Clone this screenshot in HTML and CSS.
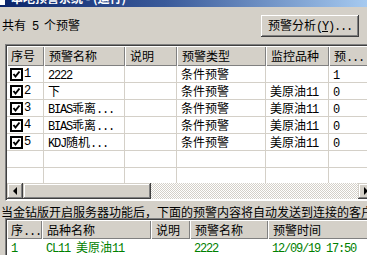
FILE: index.html
```html
<!DOCTYPE html>
<html lang="zh-CN">
<head>
  <meta charset="UTF-8" />
  <title>本地预警系统</title>
  <link rel="stylesheet" href="styles.css">
</head>
<body>
  <div class="window">
    <div class="titlebar">
      <span class="app-icon"></span>
      <span class="title">本地预警系统 - (运行)</span>
    </div>

    <div class="toolbar">
      <span class="count">共有<span class="en"> 5 </span>个预警</span>
      <button class="btn">预警分析<span class="en">(<u>Y</u>)...</span></button>
    </div>

    <div class="listview alerts">
      <div class="lv-head">
        <div class="th">序号</div>
        <div class="th">预警名称</div>
        <div class="th">说明</div>
        <div class="th">预警类型</div>
        <div class="th">监控品种</div>
        <div class="th">预<span class="en">...</span></div>
      </div>
      <div class="lv-body">
        <div class="tr">
          <div class="td idx"><svg class="check" width="13" height="13" viewBox="0 0 13 13"><rect x="1" y="1" width="11" height="11" fill="#fff" stroke="#000" stroke-width="2"/><polyline points="3.5,6 5.5,8.5 9.5,3.5" fill="none" stroke="#000" stroke-width="2"/></svg><span class="en">1</span></div>
          <div class="td"><span class="en">2222</span></div>
          <div class="td"></div>
          <div class="td">条件预警</div>
          <div class="td"></div>
          <div class="td"><span class="en">1</span></div>
        </div>
        <div class="tr">
          <div class="td idx"><svg class="check" width="13" height="13" viewBox="0 0 13 13"><rect x="1" y="1" width="11" height="11" fill="#fff" stroke="#000" stroke-width="2"/><polyline points="3.5,6 5.5,8.5 9.5,3.5" fill="none" stroke="#000" stroke-width="2"/></svg><span class="en">2</span></div>
          <div class="td">下</div>
          <div class="td"></div>
          <div class="td">条件预警</div>
          <div class="td">美原油<span class="en">11</span></div>
          <div class="td"><span class="en">0</span></div>
        </div>
        <div class="tr">
          <div class="td idx"><svg class="check" width="13" height="13" viewBox="0 0 13 13"><rect x="1" y="1" width="11" height="11" fill="#fff" stroke="#000" stroke-width="2"/><polyline points="3.5,6 5.5,8.5 9.5,3.5" fill="none" stroke="#000" stroke-width="2"/></svg><span class="en">3</span></div>
          <div class="td"><span class="en">BIAS</span>乖离<span class="en">...</span></div>
          <div class="td"></div>
          <div class="td">条件预警</div>
          <div class="td">美原油<span class="en">11</span></div>
          <div class="td"><span class="en">0</span></div>
        </div>
        <div class="tr">
          <div class="td idx"><svg class="check" width="13" height="13" viewBox="0 0 13 13"><rect x="1" y="1" width="11" height="11" fill="#fff" stroke="#000" stroke-width="2"/><polyline points="3.5,6 5.5,8.5 9.5,3.5" fill="none" stroke="#000" stroke-width="2"/></svg><span class="en">4</span></div>
          <div class="td"><span class="en">BIAS</span>乖离<span class="en">...</span></div>
          <div class="td"></div>
          <div class="td">条件预警</div>
          <div class="td">美原油<span class="en">11</span></div>
          <div class="td"><span class="en">0</span></div>
        </div>
        <div class="tr">
          <div class="td idx"><svg class="check" width="13" height="13" viewBox="0 0 13 13"><rect x="1" y="1" width="11" height="11" fill="#fff" stroke="#000" stroke-width="2"/><polyline points="3.5,6 5.5,8.5 9.5,3.5" fill="none" stroke="#000" stroke-width="2"/></svg><span class="en">5</span></div>
          <div class="td"><span class="en">KDJ</span>随机<span class="en">...</span></div>
          <div class="td"></div>
          <div class="td">条件预警</div>
          <div class="td">美原油<span class="en">11</span></div>
          <div class="td"><span class="en">0</span></div>
        </div>
        <div class="tr">
          <div class="td"></div><div class="td"></div><div class="td"></div>
          <div class="td"></div><div class="td"></div><div class="td"></div>
        </div>
        <div class="tr">
          <div class="td"></div><div class="td"></div><div class="td"></div>
          <div class="td"></div><div class="td"></div><div class="td"></div>
        </div>
      </div>
      <div class="hscroll">
        <div class="sb-btn"><span class="arrow-left"></span></div>
        <div class="sb-thumb"></div>
        <div class="sb-track"></div>
        <div class="sb-btn"><span class="arrow-right"></span></div>
      </div>
    </div>

    <div class="caption">当金钻版开启服务器功能后，下面的预警内容将自动发送到连接的客户端</div>

    <div class="listview log">
      <div class="lv-head">
        <div class="th">序<span class="en">...</span></div>
        <div class="th">品种名称</div>
        <div class="th">说明</div>
        <div class="th">预警名称</div>
        <div class="th">预警时间</div>
      </div>
      <div class="lv-body">
        <div class="tr">
          <div class="td"><span class="en">1</span></div>
          <div class="td"><span class="en">CL11 </span>美原油<span class="en">11</span></div>
          <div class="td"></div>
          <div class="td"><span class="en">2222</span></div>
          <div class="td"><span class="en">12/09/19 17:50</span></div>
        </div>
      </div>
    </div>
  </div>
</body>
</html>
```

FILE: styles.css
```css
:root {
  --face: #d4d0c8;
  --shadow: #808080;
  --dark: #404040;
  --grid: #d4d0c8;
  --green: #008000;
}
body {
  margin: 0;
  background: var(--face);
  font-family: "Noto Sans CJK SC", "Noto Sans", sans-serif;
  font-size: 12px;
  color: #000;
}
.window {
  width: 367px;
  height: 255px;
  overflow: hidden;
}
.en {
  font-family: "Liberation Mono", monospace;
  letter-spacing: -1.2px;
}

/* title bar, mostly cut off */
.titlebar {
  height: 7px;
  overflow: hidden;
  display: flex;
  align-items: flex-start;
  background: linear-gradient(90deg, #0a246a, #3a5a9a 45%, #a6caf0);
}
.app-icon {
  width: 5px;
  height: 5px;
  background: #fff;
  flex: none;
}
.title {
  margin: -9px 0 0 6px;
  line-height: 14px;
  color: #fff;
  font-weight: 700;
  white-space: nowrap;
}

.toolbar {
  height: 37px;
  display: flex;
  align-items: center;
  justify-content: space-between;
  padding: 0 8px 0 2px;
}
.count {
  line-height: 14px;
}
.btn {
  width: 98px;
  height: 22px;
  padding: 0;
  font: inherit;
  background: var(--face);
  border: 0;
  box-shadow: inset -1px -1px 0 var(--dark), inset 1px 1px 0 #fff,
              inset -2px -2px 0 var(--shadow), inset 2px 2px 0 var(--face);
  line-height: 20px;
  white-space: nowrap;
}

/* list views */
.listview {
  margin-left: 5px;
  width: 370px;
  background: #fff;
  border: 1px solid;
  border-color: var(--shadow) #fff #fff var(--shadow);
  box-shadow: inset 1px 1px 0 var(--dark);
  padding: 1px 0 0 1px;
  box-sizing: border-box;
}
.alerts {
  height: 157px;
}
.log {
  height: 40px;
  border-bottom: 0;
}
.lv-head,
.tr {
  display: grid;
  white-space: nowrap;
}
.alerts .lv-head,
.alerts .tr {
  grid-template-columns: 37px 81px 52px 89px 63px 60px;
}
.log .lv-head,
.log .tr {
  grid-template-columns: 35px 109px 39px 78px 110px;
}
.lv-head {
  height: 20px;
  background: var(--face);
}
.log .lv-head {
  height: 19px;
}
.th {
  padding-left: 5px;
  line-height: 19px;
  overflow: hidden;
  background: var(--face);
  box-shadow: inset 1px 1px 0 #fff, inset -1px -1px 0 var(--shadow);
}
.th:first-child {
  padding-left: 4px;
}
.lv-body {
  overflow: hidden;
}
.alerts .lv-body {
  height: 117px;
}
.tr {
  height: 17px;
}
.td {
  padding-left: 4px;
  line-height: 16px;
  overflow: hidden;
  border-right: 1px solid var(--grid);
  border-bottom: 1px solid var(--grid);
}
.td.idx {
  display: flex;
  align-items: center;
  padding-left: 3px;
  gap: 1px;
}
.check {
  flex: none;
}
.log .td {
  border: 0;
  color: var(--green);
  line-height: 16px;
}

/* horizontal scroll bar */
.hscroll {
  height: 16px;
  display: flex;
  background: var(--face);
}
.sb-btn,
.sb-thumb {
  background: var(--face);
  box-shadow: inset -1px -1px 0 var(--dark), inset 1px 1px 0 var(--face),
              inset -2px -2px 0 var(--shadow), inset 2px 2px 0 #fff;
}
.sb-btn {
  width: 16px;
  flex: none;
  display: flex;
  align-items: center;
  justify-content: center;
}
.sb-thumb {
  width: 128px;
  flex: none;
}
.sb-track {
  flex: 1;
  background: repeating-conic-gradient(#fff 0 25%, var(--face) 0 50%) 0 0 / 2px 2px;
}
.arrow-left {
  width: 0;
  height: 0;
  border-top: 4px solid transparent;
  border-bottom: 4px solid transparent;
  border-right: 4px solid #000;
  margin-left: -1px;
}
.arrow-right {
  width: 0;
  height: 0;
  border-top: 4px solid transparent;
  border-bottom: 4px solid transparent;
  border-left: 4px solid #000;
}

.caption {
  margin-top: 3px;
  height: 14px;
  line-height: 16px;
  padding-left: 1px;
  white-space: nowrap;
}
```
